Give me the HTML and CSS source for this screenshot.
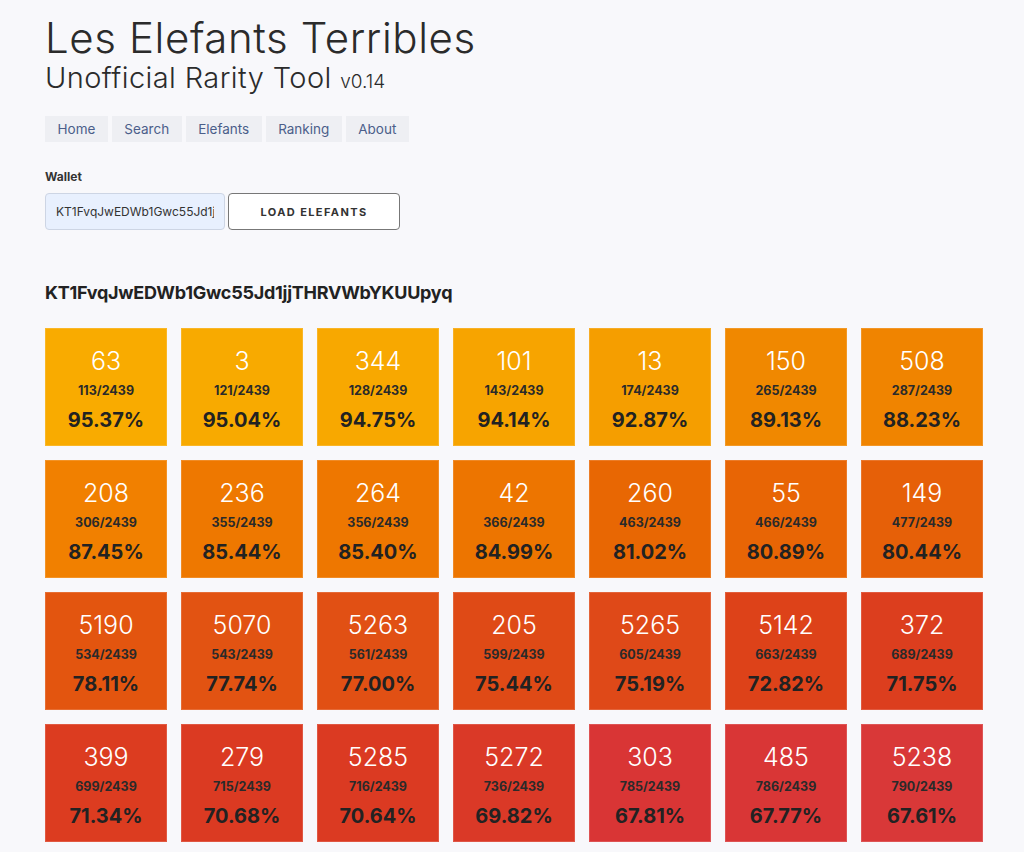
FILE: index.html
```html
<!DOCTYPE html>
<html lang="en">
<head>
    <meta charset="UTF-8">
    <meta name="viewport" content="width=device-width, initial-scale=1.0">
    <title>Les Elefants Terribles | Rarity Tool</title>
    <link rel="stylesheet" href="styles.css">
</head>
<body>
    <div class="page">
        <header class="header">
            <h1>Les Elefants Terribles</h1>
            <h2>Unofficial Rarity Tool <span class="version">v0.14</span></h2>
        </header>

        <nav class="nav">
            <a href="#">Home</a>
            <a href="#">Search</a>
            <a href="#">Elefants</a>
            <a href="#">Ranking</a>
            <a href="#">About</a>
        </nav>

        <form class="wallet-form">
            <label for="wallet">Wallet</label>
            <div class="wallet-row">
                <input id="wallet" type="text" value="KT1FvqJwEDWb1Gwc55Jd1jjTHRVWbYKUUpyq">
                <button class="load-btn" type="button">Load Elefants</button>
            </div>
        </form>

        <h3 class="wallet-title">KT1FvqJwEDWb1Gwc55Jd1jjTHRVWbYKUUpyq</h3>

        <div class="grid">
            <div class="tile" style="background:#f9ab00"><div class="id">63</div><div class="rank">113/2439</div><div class="score">95.37%</div></div>
            <div class="tile" style="background:#f8aa00"><div class="id">3</div><div class="rank">121/2439</div><div class="score">95.04%</div></div>
            <div class="tile" style="background:#f8a800"><div class="id">344</div><div class="rank">128/2439</div><div class="score">94.75%</div></div>
            <div class="tile" style="background:#f7a400"><div class="id">101</div><div class="rank">143/2439</div><div class="score">94.14%</div></div>
            <div class="tile" style="background:#f59e00"><div class="id">13</div><div class="rank">174/2439</div><div class="score">92.87%</div></div>
            <div class="tile" style="background:#f08800"><div class="id">150</div><div class="rank">265/2439</div><div class="score">89.13%</div></div>
            <div class="tile" style="background:#f08400"><div class="id">508</div><div class="rank">287/2439</div><div class="score">88.23%</div></div>

            <div class="tile" style="background:#f18000"><div class="id">208</div><div class="rank">306/2439</div><div class="score">87.45%</div></div>
            <div class="tile" style="background:#ee7800"><div class="id">236</div><div class="rank">355/2439</div><div class="score">85.44%</div></div>
            <div class="tile" style="background:#ee7700"><div class="id">264</div><div class="rank">356/2439</div><div class="score">85.40%</div></div>
            <div class="tile" style="background:#ed7500"><div class="id">42</div><div class="rank">366/2439</div><div class="score">84.99%</div></div>
            <div class="tile" style="background:#e86703"><div class="id">260</div><div class="rank">463/2439</div><div class="score">81.02%</div></div>
            <div class="tile" style="background:#e86505"><div class="id">55</div><div class="rank">466/2439</div><div class="score">80.89%</div></div>
            <div class="tile" style="background:#e66008"><div class="id">149</div><div class="rank">477/2439</div><div class="score">80.44%</div></div>

            <div class="tile" style="background:#e3550f"><div class="id">5190</div><div class="rank">534/2439</div><div class="score">78.11%</div></div>
            <div class="tile" style="background:#e25312"><div class="id">5070</div><div class="rank">543/2439</div><div class="score">77.74%</div></div>
            <div class="tile" style="background:#e15014"><div class="id">5263</div><div class="rank">561/2439</div><div class="score">77.00%</div></div>
            <div class="tile" style="background:#df4a16"><div class="id">205</div><div class="rank">599/2439</div><div class="score">75.44%</div></div>
            <div class="tile" style="background:#df4918"><div class="id">5265</div><div class="rank">605/2439</div><div class="score">75.19%</div></div>
            <div class="tile" style="background:#dd4219"><div class="id">5142</div><div class="rank">663/2439</div><div class="score">72.82%</div></div>
            <div class="tile" style="background:#dc3e1e"><div class="id">372</div><div class="rank">689/2439</div><div class="score">71.75%</div></div>

            <div class="tile" style="background:#dc3c20"><div class="id">399</div><div class="rank">699/2439</div><div class="score">71.34%</div></div>
            <div class="tile" style="background:#db3a22"><div class="id">279</div><div class="rank">715/2439</div><div class="score">70.68%</div></div>
            <div class="tile" style="background:#db3a22"><div class="id">5285</div><div class="rank">716/2439</div><div class="score">70.64%</div></div>
            <div class="tile" style="background:#da3927"><div class="id">5272</div><div class="rank">736/2439</div><div class="score">69.82%</div></div>
            <div class="tile" style="background:#d93535"><div class="id">303</div><div class="rank">785/2439</div><div class="score">67.81%</div></div>
            <div class="tile" style="background:#d93636"><div class="id">485</div><div class="rank">786/2439</div><div class="score">67.77%</div></div>
            <div class="tile" style="background:#d93838"><div class="id">5238</div><div class="rank">790/2439</div><div class="score">67.61%</div></div>
        </div>
    </div>
</body>
</html>
```

FILE: styles.css
```css
* {
    margin: 0;
    padding: 0;
    box-sizing: border-box;
}

body {
    font-family: Inter, 'Open Sans', sans-serif;
    background: #f8f8fb;
    color: #222;
}

.page {
    padding: 13px 45px 40px;
}

/* Header */
.header h1 {
    font-size: 42px;
    font-weight: 300;
    line-height: 50px;
    letter-spacing: 0.6px;
    color: #2b2b2b;
}

.header h2 {
    font-size: 29px;
    font-weight: 300;
    line-height: 30px;
    letter-spacing: 0.4px;
    color: #2b2b2b;
}

.header .version {
    font-size: 19px;
    letter-spacing: 0;
}

/* Navigation */
.nav {
    display: flex;
    gap: 4px;
    margin-top: 19px;
}

.nav a {
    display: block;
    height: 26px;
    line-height: 26px;
    padding: 0 12.5px;
    background: #eeeff3;
    color: #4b5e8a;
    font-size: 13.5px;
    text-decoration: none;
}

/* Wallet form */
.wallet-form {
    margin-top: 27px;
}

.wallet-form label {
    display: block;
    font-size: 12px;
    font-weight: 700;
    color: #333;
    margin-bottom: 9px;
}

.wallet-row {
    display: flex;
    gap: 3px;
}

.wallet-row input {
    width: 180px;
    height: 37px;
    padding: 0 10px;
    font-family: inherit;
    font-size: 12px;
    color: #333;
    background: #e8f0fe;
    border: 1px solid #cdd5e4;
    border-radius: 4px;
}

.load-btn {
    width: 172px;
    height: 37px;
    font-family: inherit;
    font-size: 11px;
    font-weight: 700;
    letter-spacing: 1.4px;
    text-transform: uppercase;
    color: #333;
    background: #fff;
    border: 1px solid #777;
    border-radius: 4px;
    cursor: pointer;
}

.wallet-title {
    margin-top: 52px;
    font-size: 18px;
    font-weight: 700;
    letter-spacing: -0.25px;
    color: #222;
}

/* Rarity tiles */
.grid {
    display: grid;
    grid-template-columns: repeat(7, 122px);
    gap: 14px;
    margin-top: 25px;
}

.tile {
    height: 118px;
    display: flex;
    flex-direction: column;
    align-items: center;
    padding-top: 17px;
    border: 1px solid rgba(255,255,255,0.15);
}

.tile .id {
    font-size: 25px;
    font-weight: 300;
    line-height: 30px;
    color: #fff;
}

.tile .rank {
    margin-top: 7px;
    font-size: 12.5px;
    font-weight: 700;
    line-height: 16px;
    color: #2a2a2a;
}

.tile .score {
    margin-top: 8px;
    font-size: 20px;
    font-weight: 700;
    line-height: 26px;
    color: #222;
}
```
